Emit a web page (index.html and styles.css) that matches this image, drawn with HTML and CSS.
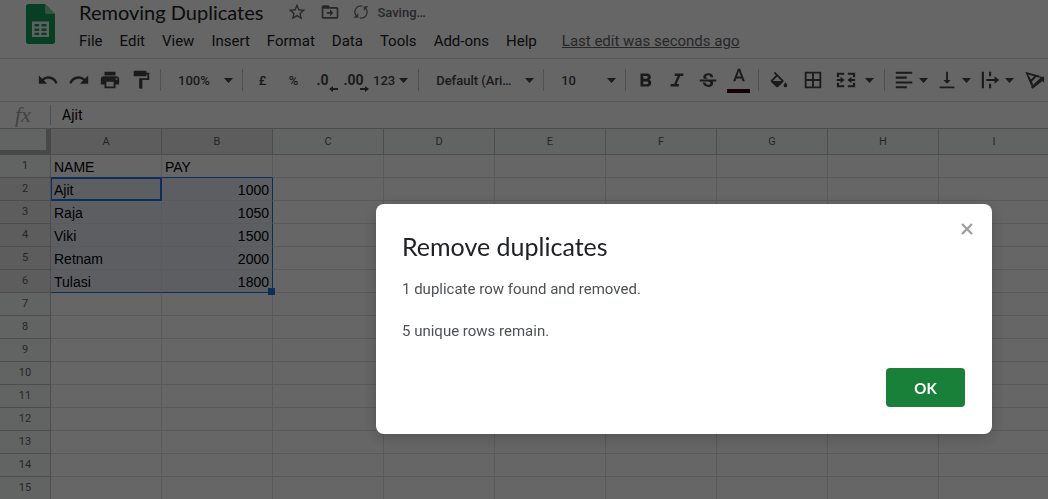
FILE: index.html
```html
<!DOCTYPE html>
<html lang="en">
<head>
<meta charset="utf-8">
<title>Removing Duplicates</title>
<link rel="stylesheet" href="styles.css">
</head>
<body>
<svg width="0" height="0" class="defs" aria-hidden="true">
  <symbol id="caret" viewBox="0 0 9 5"><path d="M0 0h9L4.500 5z"/></symbol>
</svg>
<div class="app">
  <header class="header">
    <svg class="logo" viewBox="0 0 29 40" aria-hidden="true">
      <path fill="#0f9d58" d="M2.500 0H19l10 10v27.500a2.500 2.500 0 0 1-2.500 2.500h-24A2.500 2.500 0 0 1 0 37.500v-35A2.500 2.500 0 0 1 2.500 0z"/>
      <path fill="#87ceac" d="M19 0l10 10h-7.500A2.500 2.500 0 0 1 19 7.500z"/>
      <path fill="#f1f1f1" fill-rule="evenodd" d="M6 17.500h17V33H6zM8.500 20v2.500h4.700V20zm7 0v2.500h5V20zm-7 4.500V27h4.700v-2.500zm7 0V27h5v-2.500zm-7 4.300V31h4.700v-2.200zm7 0V31h5v-2.200z"/>
    </svg>
    <div class="heading">
      <div class="title-row">
        <h1 class="title">Removing Duplicates</h1>
        <button class="plain" aria-label="Star"><svg class="icon-small" viewBox="0 0 24 24"><path d="M22 9.240l-7.190-.62L12 2 9.190 8.630 2 9.240l5.460 4.730L5.820 21 12 17.270 18.180 21l-1.630-7.030L22 9.240zM12 15.400l-3.760 2.270 1-4.280-3.320-2.880 4.380-.38L12 6.100l1.710 4.040 4.380.38-3.320 2.880 1 4.280L12 15.400z"/></svg></button>
        <button class="plain" aria-label="Move"><svg class="icon-small" viewBox="0 0 24 24"><path d="M20 6h-8l-2-2H4c-1.100 0-2 .9-2 2v12c0 1.100.9 2 2 2h16c1.100 0 2-.9 2-2V8c0-1.100-.9-2-2-2zm0 12H4V8h16v10zm-8-1l4-4-4-4v3H8v2h4z"/></svg></button>
        <div class="status">
          <svg class="icon-sync" viewBox="0 0 18 18"><path fill="none" stroke="#777" stroke-width="1.500" d="M3.600 13A6.600 6.600 0 0 1 10.500 2.500M14.400 5A6.600 6.600 0 0 1 7.500 15.500"/><path fill="#777" d="M.5 15.500h5.500V10zM17.500 2.500H12V8z"/></svg>
          <span>Saving…</span>
        </div>
      </div>
      <nav class="menu">
        <button class="menu-item">File</button>
        <button class="menu-item">Edit</button>
        <button class="menu-item">View</button>
        <button class="menu-item">Insert</button>
        <button class="menu-item">Format</button>
        <button class="menu-item">Data</button>
        <button class="menu-item">Tools</button>
        <button class="menu-item">Add-ons</button>
        <button class="menu-item">Help</button>
        <a class="last-edit" href="#">Last edit was seconds ago</a>
      </nav>
    </div>
  </header>

  <div class="toolbar" role="toolbar">
    <div class="group group-first">
      <button class="tool" aria-label="Undo"><svg class="icon" viewBox="0 0 24 24"><path d="M12.500 8c-2.650 0-5.050.99-6.900 2.600L2 7v9h9l-3.620-3.620c1.390-1.160 3.160-1.880 5.120-1.880 3.540 0 6.550 2.310 7.600 5.500l2.370-.78C21.080 11.030 17.150 8 12.500 8z"/></svg></button>
      <button class="tool" aria-label="Redo"><svg class="icon" viewBox="0 0 24 24"><path d="M18.400 10.600C16.550 8.990 14.150 8 11.500 8c-4.650 0-8.580 3.030-9.960 7.220L3.900 16c1.050-3.190 4.050-5.500 7.600-5.500 1.950 0 3.730.72 5.120 1.880L13 16h9V7l-3.600 3.600z"/></svg></button>
      <button class="tool" aria-label="Print"><svg class="icon" viewBox="0 0 24 24"><path d="M19 8H5c-1.660 0-3 1.340-3 3v6h4v4h12v-4h4v-6c0-1.660-1.340-3-3-3zm-3 11H8v-5h8v5zm3-7c-.55 0-1-.45-1-1s.45-1 1-1 1 .45 1 1-.45 1-1 1zm-1-9H6v4h12V3z"/></svg></button>
      <button class="tool" aria-label="Paint format"><svg class="icon" viewBox="0 0 24 24"><path d="M18 4V3c0-.55-.45-1-1-1H5c-.55 0-1 .45-1 1v4c0 .55.45 1 1 1h12c.55 0 1-.45 1-1V6h1v4H10v10.500c0 .55.450 1 1 1h1.500c.55 0 1-.45 1-1V12H21V4h-3z"/></svg></button>
    </div>
    <div class="group group-select">
      <select class="select" aria-label="Zoom"><option>100%</option></select>
      <svg class="caret"><use href="#caret"/></svg>
    </div>
    <div class="group">
      <button class="tool">£</button>
      <button class="tool">%</button>
      <button class="tool tool-decimal" aria-label="Decrease decimal places">.0<svg class="arrow arrow-left" viewBox="0 0 9 6"><path d="M0 3l4-3v2h5v2H4v2z"/></svg></button>
      <button class="tool tool-decimal" aria-label="Increase decimal places">.00<svg class="arrow" viewBox="0 0 9 6"><path d="M9 3L5 0v2H0v2h5v2z"/></svg></button>
      <button class="tool tool-menu tool-format">123<svg class="caret"><use href="#caret"/></svg></button>
    </div>
    <div class="group group-select group-font">
      <select class="select" aria-label="Font"><option>Default (Ari…</option></select>
      <svg class="caret"><use href="#caret"/></svg>
    </div>
    <div class="group group-select">
      <select class="select" aria-label="Font size"><option>10</option></select>
      <svg class="caret"><use href="#caret"/></svg>
    </div>
    <div class="group">
      <button class="tool" aria-label="Bold"><svg class="icon" viewBox="0 0 24 24"><path d="M15.600 11.790c.97-.67 1.650-1.770 1.650-2.790 0-2.260-1.750-4-4-4H6v14h8.040c2.090 0 3.710-1.700 3.710-3.790 0-1.520-.86-2.820-2.150-3.420zM9 7.500h3.500c.83 0 1.500.67 1.500 1.500s-.67 1.500-1.500 1.500H9v-3zm4 9H9v-3h4c.83 0 1.500.67 1.500 1.500s-.67 1.500-1.500 1.500z"/></svg></button>
      <button class="tool" aria-label="Italic"><svg class="icon" viewBox="0 0 24 24"><path d="M9.500 5v2.600h3.200L8.900 16.400H5V19h9v-2.600h-2.400l3.800-8.800H19V5z"/></svg></button>
      <button class="tool" aria-label="Strikethrough"><svg class="icon" viewBox="0 0 24 24"><path d="M6.850 7.080C6.850 4.370 9.450 3 12.240 3c1.640 0 3 .49 3.900 1.280.77.65 1.460 1.730 1.460 3.240h-3.010c0-.31-.05-.59-.15-.85-.29-.86-1.200-1.280-2.250-1.280-1.860 0-2.340 1.020-2.340 1.700 0 .48.25.88.74 1.210.38.25.77.48 1.410.7H7.390c-.21-.34-.54-.89-.54-1.920zM21 12v-2H3v2h9.620c1.150.45 1.960.75 1.960 1.970 0 1-.81 1.670-2.280 1.670-1.540 0-2.930-.54-2.930-2.510H6.400c0 .55.08 1.130.24 1.580.81 2.290 3.290 3.300 5.670 3.300 2.270 0 5.300-.89 5.300-4.050 0-.3-.01-1.160-.48-1.940H21V12z" transform="translate(0 1.500)"/></svg></button>
      <button class="tool tool-color" aria-label="Text color"><svg class="icon-color" viewBox="0 0 24 24"><path d="M10.700 2L5 17h2.800l1.100-3.200h6.200l1.100 3.200H19L13.300 2zm-1 9.500L12 5l2.300 6.500z"/></svg></button>
    </div>
    <div class="group group-cells">
      <button class="tool" aria-label="Fill color"><svg class="icon" viewBox="0 0 24 24"><path transform="translate(0 3)" d="M16.560 8.940L7.620 0 6.210 1.410l2.380 2.380-5.150 5.150c-.59.59-.59 1.540 0 2.120l5.500 5.500c.29.29.68.44 1.060.44s.77-.15 1.060-.44l5.500-5.500c.59-.58.59-1.530 0-2.120zM5.210 10L10 5.210 14.790 10H5.210zM19 11.500s-2 2.170-2 3.500c0 1.100.9 2 2 2s2-.9 2-2c0-1.330-2-3.500-2-3.500z"/></svg></button>
      <button class="tool" aria-label="Borders"><svg class="icon" viewBox="0 0 24 24"><path d="M3 3v18h18V3H3zm8 16H5v-6h6v6zm0-8H5V5h6v6zm8 8h-6v-6h6v6zm0-8h-6V5h6v6z"/></svg></button>
      <button class="tool tool-menu tool-merge" aria-label="Merge cells"><svg class="icon" viewBox="0 0 24 24"><path d="M2 4h8v2.400H4.400V9H2zm12 0h8v5h-2.400V6.400H14zM2 15h2.400v2.600H10V20H2zm17.600 0H22v5h-8v-2.400h5.600zM2 10.900h4V8.500l4.500 3.500L6 15.500v-2.400H2zm20 0h-4V8.500L13.500 12l4.500 3.500v-2.400h4z"/></svg><svg class="caret"><use href="#caret"/></svg></button>
    </div>
    <div class="group group-align">
      <button class="tool tool-menu" aria-label="Horizontal align"><svg class="icon" viewBox="0 0 24 24"><path d="M3 3h18v2.200H3zm0 5.300h12v2.200H3zm0 5.200h18v2.200H3zm0 5.300h12V21H3z"/></svg><svg class="caret"><use href="#caret"/></svg></button>
      <button class="tool tool-menu" aria-label="Vertical align"><svg class="icon" viewBox="0 0 24 24"><path d="M16 12h-3V3h-2v9H8l4 4 4-4zM4 19v2h16v-2H4z"/></svg><svg class="caret"><use href="#caret"/></svg></button>
      <button class="tool tool-menu" aria-label="Text wrapping"><svg class="icon" viewBox="0 0 24 24"><path d="M3 3h2.400v18H3zM11 3h2.200v5H11zm0 13h2.200v5H11zM8 11h9V8l5 4-5 4v-3H8z"/></svg><svg class="caret"><use href="#caret"/></svg></button>
      <button class="tool" aria-label="Text rotation"><svg class="icon" viewBox="0 0 24 24"><path fill-rule="evenodd" d="M2.500 3L19 7.500 18 9.600l-3.500-1-4.700 5 1.200 3.600L9 18.500zM5.500 6l3.200 5.500 3.500-3.700zM8.500 19.500l10-9.500-1.500-1.500h6V15l-1.800-1.800L10.500 21.500z"/></svg></button>
    </div>
  </div>

  <div class="formula-bar">
    <label class="fx" for="formula">fx</label>
    <input class="formula" id="formula" type="text" value="Ajit">
  </div>

  <table class="sheet">
    <colgroup><col class="col-index"><col span="9" class="col-data"></colgroup>
    <thead><tr><th class="corner"></th><th class="chosen">A</th><th class="chosen">B</th><th>C</th><th>D</th><th>E</th><th>F</th><th>G</th><th>H</th><th>I</th></tr></thead>
    <tbody>
      <tr class="above-range"><th>1</th><td>NAME</td><td>PAY</td><td></td><td></td><td></td><td></td><td></td><td></td><td></td></tr>
      <tr class="range"><th>2</th><td class="active">Ajit</td><td class="number">1000</td><td></td><td></td><td></td><td></td><td></td><td></td><td></td></tr>
      <tr class="range"><th>3</th><td>Raja</td><td class="number">1050</td><td></td><td></td><td></td><td></td><td></td><td></td><td></td></tr>
      <tr class="range"><th>4</th><td>Viki</td><td class="number">1500</td><td></td><td></td><td></td><td></td><td></td><td></td><td></td></tr>
      <tr class="range"><th>5</th><td>Retnam</td><td class="number">2000</td><td></td><td></td><td></td><td></td><td></td><td></td><td></td></tr>
      <tr class="range range-end"><th>6</th><td>Tulasi</td><td class="number">1800<span class="handle"></span></td><td></td><td></td><td></td><td></td><td></td><td></td><td></td></tr>
      <tr><th>7</th><td></td><td></td><td></td><td></td><td></td><td></td><td></td><td></td><td></td></tr>
      <tr><th>8</th><td></td><td></td><td></td><td></td><td></td><td></td><td></td><td></td><td></td></tr>
      <tr><th>9</th><td></td><td></td><td></td><td></td><td></td><td></td><td></td><td></td><td></td></tr>
      <tr><th>10</th><td></td><td></td><td></td><td></td><td></td><td></td><td></td><td></td><td></td></tr>
      <tr><th>11</th><td></td><td></td><td></td><td></td><td></td><td></td><td></td><td></td><td></td></tr>
      <tr><th>12</th><td></td><td></td><td></td><td></td><td></td><td></td><td></td><td></td><td></td></tr>
      <tr><th>13</th><td></td><td></td><td></td><td></td><td></td><td></td><td></td><td></td><td></td></tr>
      <tr><th>14</th><td></td><td></td><td></td><td></td><td></td><td></td><td></td><td></td><td></td></tr>
      <tr><th>15</th><td></td><td></td><td></td><td></td><td></td><td></td><td></td><td></td><td></td></tr>
    </tbody>
  </table>
</div>

<div class="backdrop">
  <section class="dialog" role="dialog" aria-labelledby="dialog-title">
    <button class="close" aria-label="Close"><svg class="icon-close" viewBox="0 0 12 12"><path fill="none" stroke="#a0a0a0" stroke-width="2.400" d="M1 1l10 10M11 1L1 11"/></svg></button>
    <h2 class="dialog-title" id="dialog-title">Remove duplicates</h2>
    <p class="message">1 duplicate row found and removed.</p>
    <p class="message">5 unique rows remain.</p>
    <div class="actions"><button class="ok">OK</button></div>
  </section>
</div>
</body>
</html>
```
FILE: styles.css
```css
* { box-sizing: border-box; }

body {
  margin: 0;
  height: 100vh;
  overflow: hidden;
  background: #fff;
  color: #202124;
  font-family: Roboto, "Liberation Sans", sans-serif;
}

button, select, input {
  margin: 0;
  padding: 0;
  border: 0;
  background: none;
  color: inherit;
  font: inherit;
}

svg { display: block; flex: none; }
.defs { position: absolute; }

/* Header */
.header {
  display: flex;
  gap: 24px;
  height: 59px;
  padding: 0 26px;
  border-bottom: 1px solid #dadce0;
}
.logo { width: 29px; height: 40px; margin-top: 4px; }
.heading { display: flex; flex-direction: column; }
.title-row { display: flex; align-items: center; height: 24px; }
.title {
  margin: 0 24px 0 0;
  font: 400 20px/24px Lato, "Open Sans", sans-serif;
}
.plain { margin-right: 13px; }
.icon-small { width: 20px; height: 20px; fill: #5f6368; }
.status {
  display: flex;
  align-items: center;
  gap: 8px;
  color: #5f6368;
  font-size: 13px;
  font-weight: 500;
}
.icon-sync { width: 16px; height: 16px; }
.menu {
  display: flex;
  align-items: center;
  gap: 17px;
  height: 36px;
  font-size: 15px;
  white-space: nowrap;
}
.last-edit { margin-left: 8px; color: #5f6368; }

/* Toolbar */
.toolbar {
  display: flex;
  align-items: center;
  height: 43px;
  border-bottom: 1px solid #dadce0;
  color: #444;
  font-size: 13px;
  font-weight: 500;
}
.group {
  display: flex;
  flex: none;
  align-items: center;
  height: 22px;
  padding: 0 4px;
  border-right: 1px solid #c4c7cc;
}
.group-first { padding-left: 32px; }
.group-select { width: 82px; padding: 0 9px 0 17px; }
.group-font { width: 125px; }
.group-cells { gap: 3px; }
.group-align { border-right: 0; }
.select { flex: 1; min-width: 0; appearance: none; }
.tool {
  display: flex;
  flex: none;
  align-items: center;
  justify-content: center;
  width: 31px;
  height: 30px;
}
.tool-menu { width: auto; min-width: 43px; padding: 0 4px; gap: 4px; }
.tool-format { padding: 0 6px 0 2px; }
.tool-merge { gap: 8px; padding-right: 6px; }
.icon { width: 22px; height: 22px; fill: #444; }
.caret { width: 9px; height: 5px; fill: #444; }
.tool-decimal { position: relative; font-size: 14px; font-weight: 700; padding-right: 4px; }
.arrow { position: absolute; right: 2px; bottom: 3px; width: 9px; height: 6px; fill: #444; }
.tool-color { flex-direction: column; gap: 2px; }
.icon-color { width: 20px; height: 20px; fill: #444; }
.tool-color::after { content: ""; width: 23px; height: 4px; background: #300010; }

/* Formula bar */
.formula-bar {
  display: flex;
  align-items: center;
  height: 27px;
  border-bottom: 1px solid #c0c0c0;
}
.fx {
  width: 51px;
  padding-left: 15px;
  border-right: 1px solid #c4c4c4;
  color: #a4a8a6;
  font: italic 22px/20px "Liberation Serif", serif;
}
.formula { flex: 1; padding: 0 0 1px 11px; font-size: 14px; color: #000; }

/* Grid */
.sheet {
  width: 1050px;
  table-layout: fixed;
  border-collapse: separate;
  border-spacing: 0;
}
.col-index { width: 51px; }
.col-data { width: 111px; }
.sheet th, .sheet td {
  height: 23px;
  padding: 2px 3px 0;
  border: 0 solid #e0e0e0;
  border-width: 0 1px 1px 0;
  line-height: 20px;
}
.sheet th {
  padding-top: 0;
  border-color: #c0c0c0;
  background: #f6f8f7;
  color: #5f6368;
  font-size: 11px;
  font-weight: 400;
}
.sheet thead th { height: 26px; }
.sheet .corner { border: solid #b7b7b7; border-width: 0 5px 5px 0; }
.sheet .chosen, .sheet .range th { background: #e6e9e7; }
.sheet td { color: #000; font: 14px/20px "Liberation Sans", Arial, sans-serif; }
.sheet .number { position: relative; text-align: right; }
.range td:nth-child(-n+3) { background: #e6ecf6; }
.above-range td:nth-child(-n+3), .range-end td:nth-child(-n+3) { border-bottom-color: #1a73e8; }
.range td:nth-child(3) { border-right-color: #1a73e8; }
.sheet .active { box-shadow: inset 0 0 0 1px #1a73e8; border-color: #1a73e8; }
.handle {
  position: absolute;
  right: -3px;
  bottom: -3px;
  width: 7px;
  height: 7px;
  background: #1a73e8;
}

/* Dialog */
.backdrop { position: fixed; inset: 0; background: rgba(0, 0, 0, 0.6); }
.dialog {
  position: absolute;
  top: 204px;
  right: 56px;
  width: 616px;
  padding: 26px 27px 27px 26px;
  border-radius: 8px;
  background: #fff;
  box-shadow: 0 4px 16px rgba(0, 0, 0, 0.2);
}
.close { position: absolute; top: 19px; right: 19px; }
.icon-close { width: 12px; height: 12px; }
.dialog-title {
  margin: 0 0 18px;
  font: 400 25px/32px Lato, "Open Sans", sans-serif;
}
.message { margin: 0 0 24px; color: #4d5156; font-size: 15px; line-height: 18px; }
.actions { display: flex; justify-content: flex-end; padding-top: 4px; }
.ok {
  width: 79px;
  height: 39px;
  border-radius: 4px;
  background: #188038;
  color: #fff;
  font: 700 15px/20px Lato, "Open Sans", sans-serif;
}
```
